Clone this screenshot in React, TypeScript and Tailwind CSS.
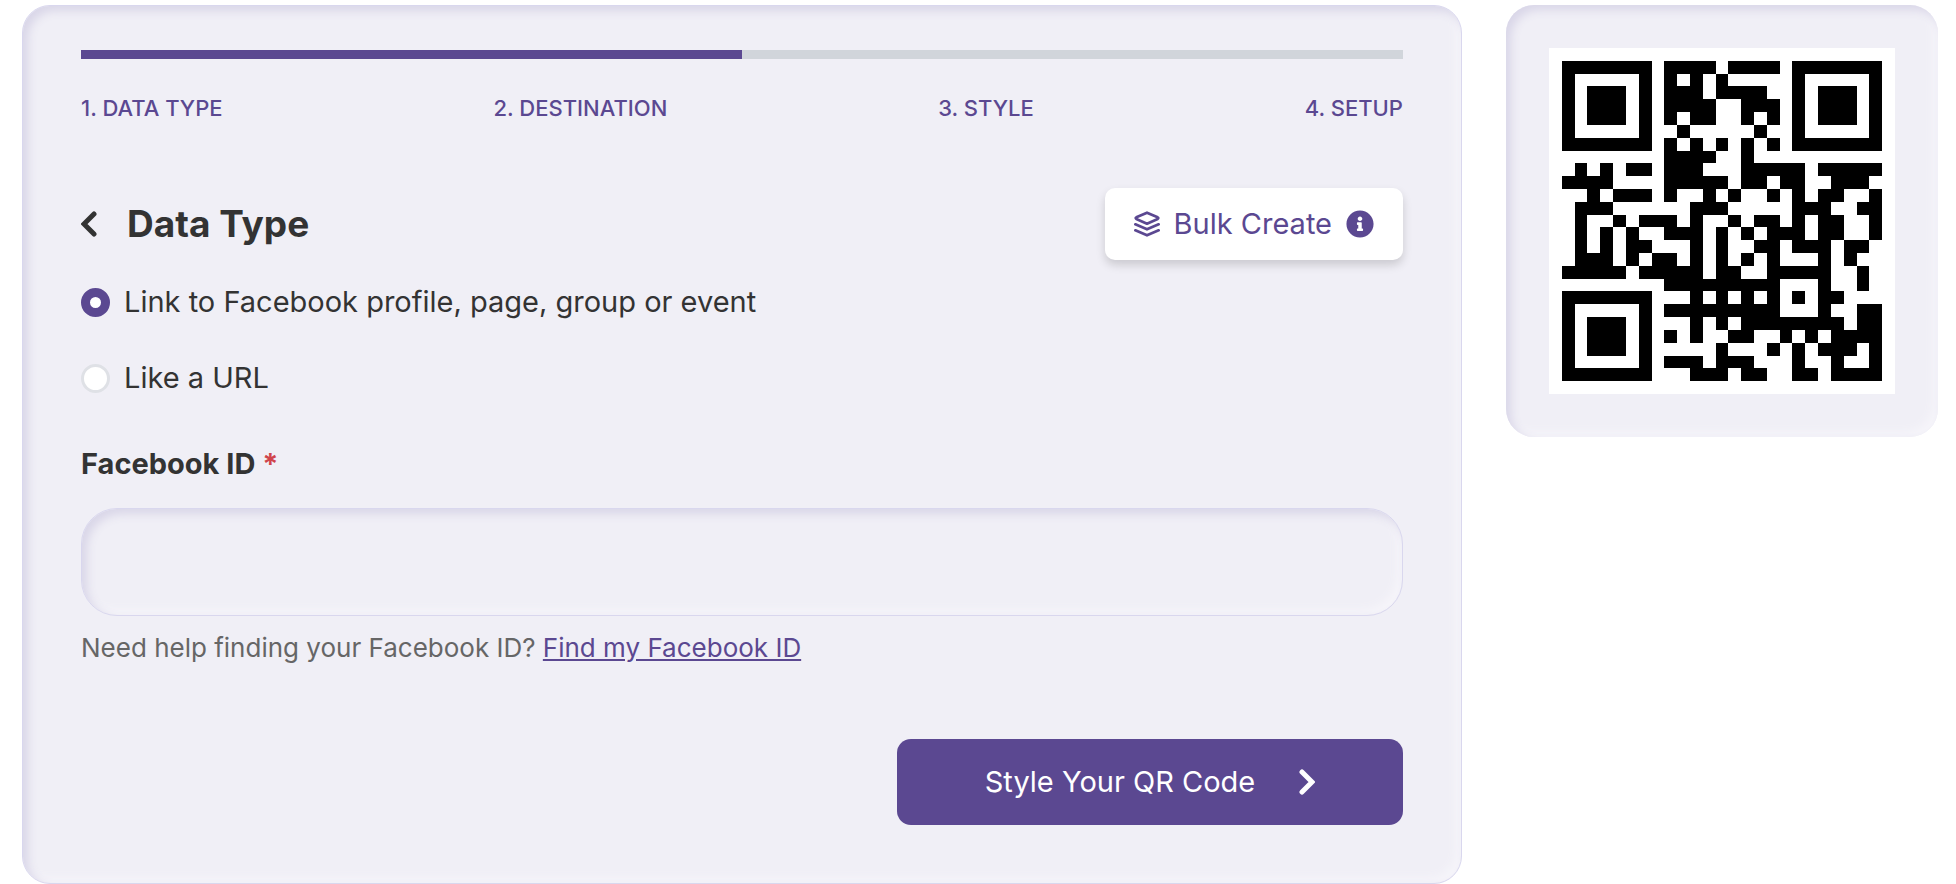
import React from 'react'
import { FaInfoCircle } from 'react-icons/fa'

const steps = ['1. DATA TYPE', '2. DESTINATION', '3. STYLE', '4. SETUP']

const qrRows = [
  '1111111011110111101111111',
  '1000001010101000001000001',
  '1011101011101111001011101',
  '1011101011110011101011101',
  '1011101010110010101011101',
  '1000001001000001001000001',
  '1111111010101010101111111',
  '0000000011110010000000000',
  '0101011011100011111011111',
  '1111000011111011011001110',
  '0010111010010100101011001',
  '0111000000111000001110011',
  '0100101110100101101011001',
  '0101010011101010111011001',
  '0101011000101001101110110',
  '0111010110101010100010100',
  '1111101111101100111110010',
  '0000000011111111100010010',
  '1111111000101010101011000',
  '1000001011111111100010011',
  '1011101000101011111111011',
  '1011101010100110010101111',
  '1011101000001000101011101',
  '1000001011101110001001001',
  '1111111000111011001101111',
]

const QrCode = () => {
  // One path, one square per dark module
  const d = qrRows
    .map((row, y) =>
      row
        .split('')
        .map((cell, x) => (cell === '1' ? `M${x + 1} ${y + 1}h1v1h-1z` : ''))
        .join('')
    )
    .join('')

  return (
    <svg viewBox="0 0 27 27" shapeRendering="crispEdges" className="w-full" role="img" aria-label="QR code preview">
      <rect width="27" height="27" fill="#fff" />
      <path d={d} fill="#000" />
    </svg>
  )
}

const LayersIcon = () => (
  <svg viewBox="0 0 78 78" className="size-[26px]" fill="none" stroke="currentColor" strokeWidth="8" strokeLinecap="round" strokeLinejoin="round">
    <path d="M39 5 L71 19 Q75 21 71 24 L39 38 L7 24 Q3 21 7 19 Z" />
    <path d="M4 40 L39 55 L74 40" />
    <path d="M4 58 L39 73 L74 58" />
  </svg>
)

const Chevron = ({ className }: { className?: string }) => (
  <svg viewBox="0 0 16 26" className={className} fill="none" stroke="currentColor" strokeWidth="5" strokeLinecap="round">
    <path d="M3 3 L13 13 L3 23" />
  </svg>
)

const App = () => {
  return (
    <div className="grid grid-cols-[10fr_3fr] items-start gap-11 pt-[5px] pl-[22px] pr-[18px] font-['Inter',sans-serif] text-[#333]">
      {/* Form card */}
      <main className="rounded-[28px] border border-[#d9d7ee] bg-[#f0eff6] px-[58px] pt-11 pb-[58px] shadow-[inset_5px_5px_10px_#d9d6e8,inset_-5px_-5px_10px_#f6f5fa]">
        {/* Progress */}
        <div className="h-[9px] bg-[#d1d5db]">
          <div className="h-full w-1/2 bg-[#5b4891]" />
        </div>
        <ol className="mt-[33px] flex justify-between text-[22px] leading-8 font-medium text-[#5b4891]">
          {steps.map((step) => (
            <li key={step}>{step}</li>
          ))}
        </ol>

        {/* Title row */}
        <div className="mt-16 flex items-center justify-between">
          <div className="flex items-center gap-[30px]">
            <button type="button" aria-label="Back">
              <Chevron className="h-[26px] w-4 rotate-180" />
            </button>
            <h1 className="text-[37px] leading-10 font-bold">Data Type</h1>
          </div>
          <button
            type="button"
            className="flex h-[72px] items-center gap-[14px] rounded-[10px] bg-white px-[29px] text-[29px] text-[#5b4891] shadow-[0_5px_10px_#00000028]"
          >
            <LayersIcon />
            Bulk Create
            <FaInfoCircle className="size-7" />
          </button>
        </div>

        {/* Link type */}
        <div className="mt-5 flex flex-col gap-8 text-[29px] leading-[44px]">
          <label className="flex items-center gap-[14px]">
            <input
              type="radio"
              name="linkType"
              defaultChecked
              className="size-[29px] appearance-none rounded-full border-[3px] border-[#dfe1e6] bg-white checked:border-9 checked:border-[#5b4891]"
            />
            Link to Facebook profile, page, group or event
          </label>
          <label className="flex items-center gap-[14px]">
            <input
              type="radio"
              name="linkType"
              className="size-[29px] appearance-none rounded-full border-[3px] border-[#dfe1e6] bg-white checked:border-9 checked:border-[#5b4891]"
            />
            Like a URL
          </label>
        </div>

        {/* Facebook ID */}
        <label htmlFor="facebookId" className="mt-[42px] block text-[29px] leading-[44px] font-bold">
          Facebook ID <span className="text-[#d0454c]">*</span>
        </label>
        <input
          id="facebookId"
          type="text"
          required
          className="mt-[22px] block h-[108px] w-full rounded-[36px] border border-[#d9d7ee] bg-[#f0eff6] px-8 text-[29px] shadow-[inset_5px_5px_10px_#d9d6e8,inset_-5px_-5px_10px_#f6f5fa] outline-none"
        />
        <p className="mt-4 text-[26px] leading-8 text-[#666]">
          Need help finding your Facebook ID?{' '}
          <a href="#find-id" className="text-[#5b4891] underline">
            Find my Facebook ID
          </a>
        </p>

        <div className="mt-[75px] flex justify-end">
          <button
            type="button"
            className="flex h-[86px] w-[506px] items-center justify-center gap-11 rounded-[14px] bg-[#5b4891] text-[29px] text-white"
          >
            Style Your QR Code
            <Chevron className="h-[26px] w-4" />
          </button>
        </div>
      </main>

      {/* Preview card */}
      <aside className="rounded-[28px] bg-[#f0eff6] p-[43px] shadow-[inset_5px_5px_10px_#d9d6e8,inset_-5px_-5px_10px_#f6f5fa]">
        <QrCode />
      </aside>
    </div>
  )
}

export default App
